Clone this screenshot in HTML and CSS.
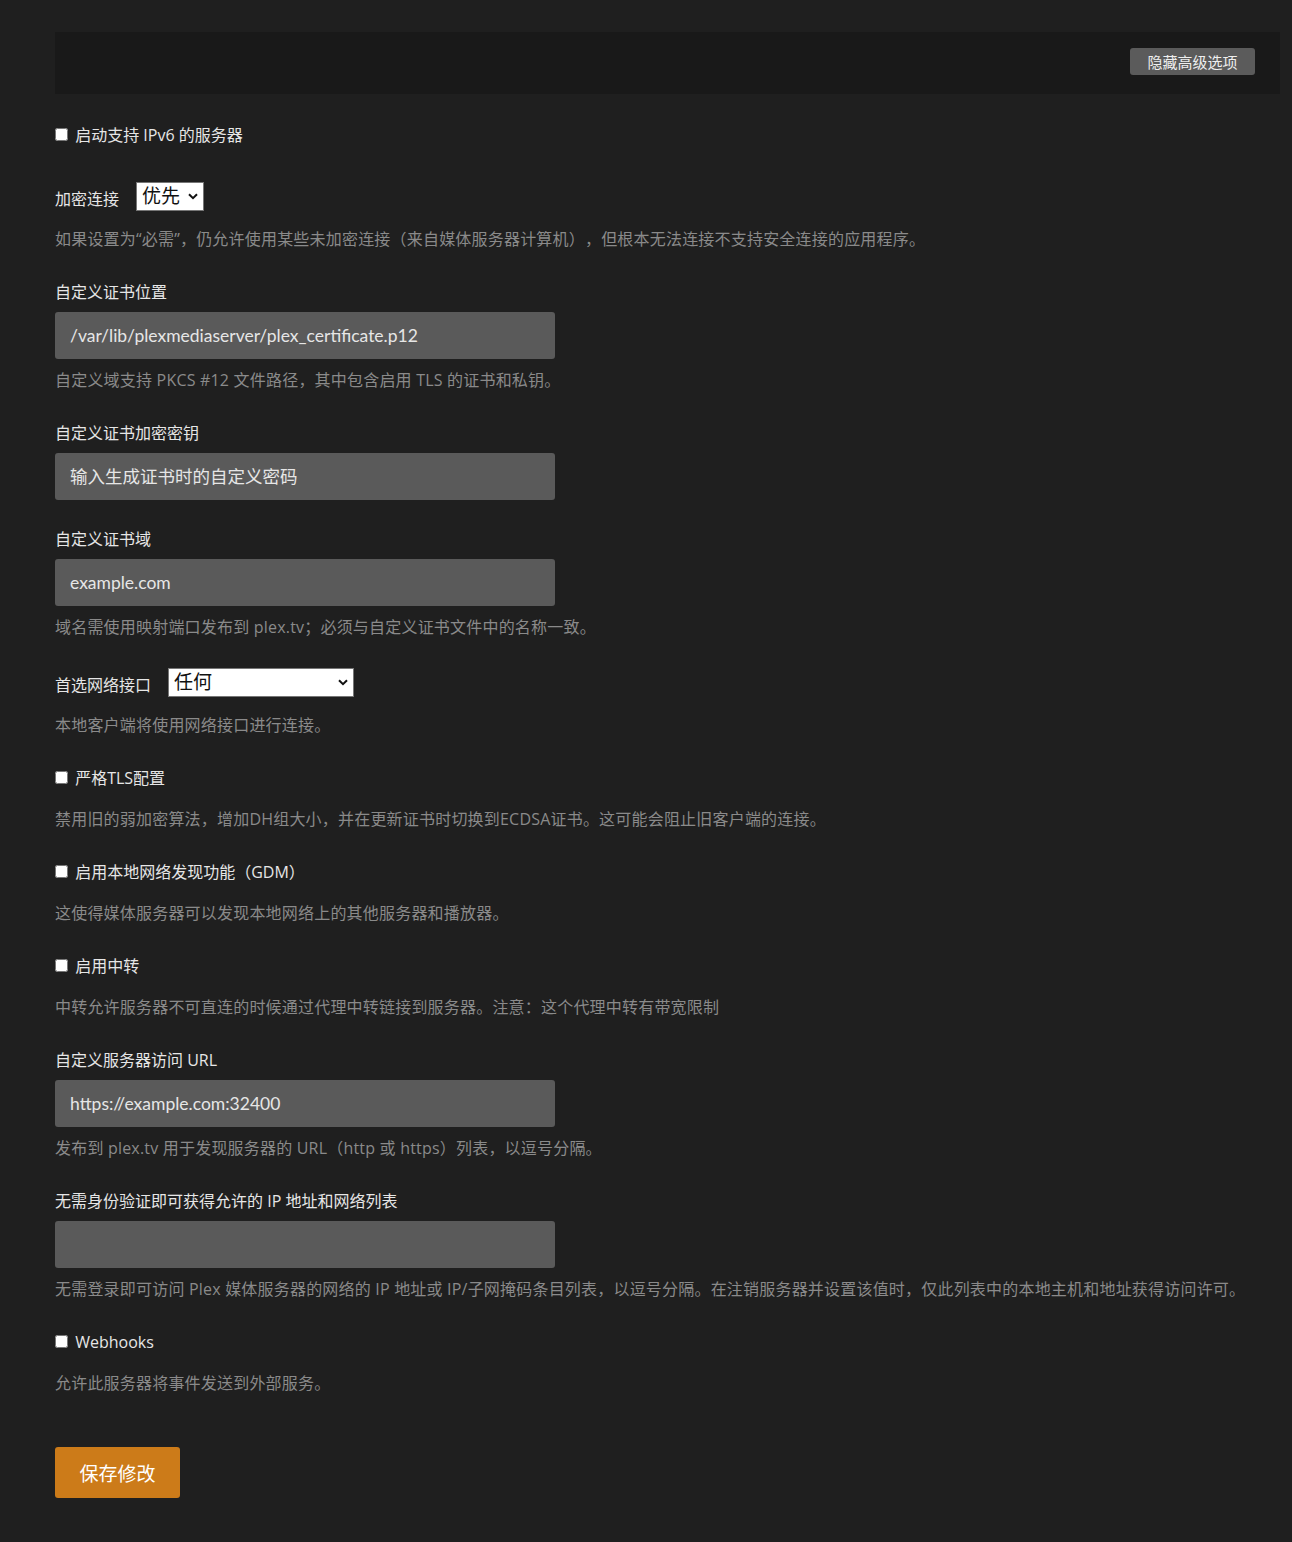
FILE: index.html
```html
<!DOCTYPE html>
<html lang="zh-CN">
<head>
    <meta charset="UTF-8">
    <meta name="viewport" content="width=device-width, initial-scale=1.0">
    <title>网络设置</title>
    <link rel="stylesheet" href="styles.css">
</head>
<body>
    <div class="page">
        <div class="toolbar">
            <button class="btn-advanced">隐藏高级选项</button>
        </div>

        <form class="settings">
            <div class="group group-first">
                <label class="check"><input type="checkbox"> 启动支持 IPv6 的服务器</label>
            </div>

            <div class="group">
                <div class="inline">
                    <label class="label">加密连接</label>
                    <span class="select-wrap select-small">
                        <select class="select">
                            <option>优先</option>
                        </select>
                        <svg class="chevron" width="10" height="7" viewBox="0 0 10 7"><path d="M1 1.2 5 5.2 9 1.2" fill="none" stroke="#111" stroke-width="2"/></svg>
                    </span>
                </div>
                <p class="help">如果设置为“必需”，仍允许使用某些未加密连接（来自媒体服务器计算机），但根本无法连接不支持安全连接的应用程序。</p>
            </div>

            <div class="group">
                <label class="label">自定义证书位置</label>
                <input class="field" type="text" placeholder="/var/lib/plexmediaserver/plex_certificate.p12">
                <p class="help">自定义域支持 PKCS #12 文件路径，其中包含启用 TLS 的证书和私钥。</p>
            </div>

            <div class="group group-tight">
                <label class="label">自定义证书加密密钥</label>
                <input class="field" type="text" placeholder="输入生成证书时的自定义密码">
            </div>

            <div class="group">
                <label class="label">自定义证书域</label>
                <input class="field" type="text" placeholder="example.com">
                <p class="help">域名需使用映射端口发布到 plex.tv；必须与自定义证书文件中的名称一致。</p>
            </div>

            <div class="group">
                <div class="inline">
                    <label class="label">首选网络接口</label>
                    <span class="select-wrap select-wide">
                        <select class="select">
                            <option>任何</option>
                        </select>
                        <svg class="chevron" width="10" height="7" viewBox="0 0 10 7"><path d="M1 1.2 5 5.2 9 1.2" fill="none" stroke="#111" stroke-width="2"/></svg>
                    </span>
                </div>
                <p class="help">本地客户端将使用网络接口进行连接。</p>
            </div>

            <div class="group">
                <label class="check"><input type="checkbox"> 严格TLS配置</label>
                <p class="help help-check">禁用旧的弱加密算法，增加DH组大小，并在更新证书时切换到ECDSA证书。这可能会阻止旧客户端的连接。</p>
            </div>

            <div class="group">
                <label class="check"><input type="checkbox"> 启用本地网络发现功能（GDM）</label>
                <p class="help help-check">这使得媒体服务器可以发现本地网络上的其他服务器和播放器。</p>
            </div>

            <div class="group">
                <label class="check"><input type="checkbox"> 启用中转</label>
                <p class="help help-check">中转允许服务器不可直连的时候通过代理中转链接到服务器。注意：这个代理中转有带宽限制</p>
            </div>

            <div class="group">
                <label class="label">自定义服务器访问 URL</label>
                <input class="field" type="text" placeholder="https://example.com:32400">
                <p class="help">发布到 plex.tv 用于发现服务器的 URL（http 或 https）列表，以逗号分隔。</p>
            </div>

            <div class="group">
                <label class="label">无需身份验证即可获得允许的 IP 地址和网络列表</label>
                <input class="field" type="text">
                <p class="help">无需登录即可访问 Plex 媒体服务器的网络的 IP 地址或 IP/子网掩码条目列表，以逗号分隔。在注销服务器并设置该值时，仅此列表中的本地主机和地址获得访问许可。</p>
            </div>

            <div class="group">
                <label class="check"><input type="checkbox"> Webhooks</label>
                <p class="help help-check">允许此服务器将事件发送到外部服务。</p>
            </div>

            <button type="button" class="btn-save">保存修改</button>
        </form>
    </div>
</body>
</html>
```

FILE: styles.css
```css
body {
    margin: 0;
    background-color: #1f1f1f;
    color: #e6e6e6;
    font-family: "Open Sans", "Noto Sans CJK SC", sans-serif;
    font-size: 16px;
    text-spacing-trim: space-all;
}
.page {
    padding: 32px 12px 40px 55px;
}
.toolbar {
    background-color: #191919;
    height: 62px;
    display: flex;
    align-items: flex-start;
    justify-content: flex-end;
    box-sizing: border-box;
    padding: 16px 25px 0 0;
}
.btn-advanced {
    background-color: #5b5b5b;
    color: #eee;
    border: none;
    border-radius: 3px;
    height: 27px;
    width: 125px;
    padding: 0;
    font-family: inherit;
    font-size: 15px;
    cursor: pointer;
}
.settings {
    margin-top: 31px;
}
.group {
    margin-bottom: 32px;
}
.group-first {
    margin-bottom: 39px;
}
.group-tight {
    margin-bottom: 29px;
}
.label {
    display: block;
    line-height: 20px;
}
.inline {
    display: flex;
    align-items: center;
    height: 30px;
    margin-top: -3px;
}
.inline .label {
    margin-right: 17px;
    padding-top: 5px;
}
.check {
    display: block;
    line-height: 20px;
}
.check input {
    margin: 0 3px 0 0;
    width: 13px;
    height: 13px;
}
.select-wrap {
    position: relative;
    display: block;
    height: 29px;
}
.select-small {
    width: 68px;
}
.select-wide {
    width: 186px;
}
.select {
    appearance: none;
    width: 100%;
    height: 100%;
    box-sizing: border-box;
    background-color: #fff;
    color: #111;
    border: 1px solid #767676;
    border-radius: 0;
    font-family: inherit;
    font-size: 19px;
    padding: 0 0 0 5px;
    line-height: 27px;
}
.chevron {
    position: absolute;
    right: 6px;
    top: 11px;
    pointer-events: none;
}
.field {
    display: block;
    box-sizing: border-box;
    width: 500px;
    height: 47px;
    margin-top: 10px;
    padding: 0 15px;
    background-color: #5a5a5a;
    color: #e6e6e6;
    border: none;
    border-radius: 3px;
    font-family: Lato, "Noto Sans CJK SC", sans-serif;
    font-size: 17.5px;
}
.field::placeholder {
    color: #e6e6e6;
}
.help {
    margin: 10px 0 0;
    line-height: 22px;
    color: #8a8a8a;
    letter-spacing: 0.2px;
}
.inline + .help {
    margin-top: 17px;
}
.help-check {
    margin-top: 20px;
}
.btn-save {
    margin-top: 21px;
    background-color: #cc7b19;
    color: #fff;
    border: none;
    border-radius: 3px;
    height: 51px;
    width: 125px;
    padding: 0;
    font-family: inherit;
    font-size: 19px;
    cursor: pointer;
}
```
